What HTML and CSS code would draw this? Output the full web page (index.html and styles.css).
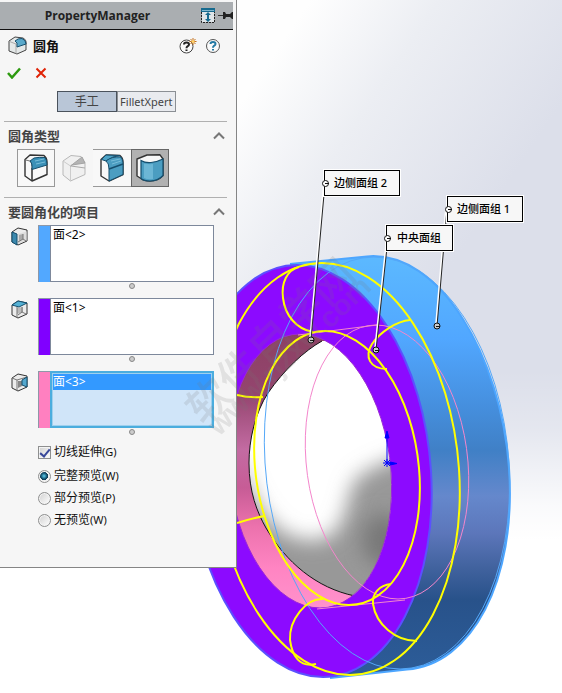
FILE: index.html
```html
<!DOCTYPE html>
<html lang="zh-CN">
<head>
<meta charset="utf-8">
<title>PropertyManager</title>
<link rel="stylesheet" href="styles.css">
</head>
<body>
<main class="stage">
<svg class="scene" viewBox="0 0 562 693" preserveAspectRatio="xMinYMin slice" aria-hidden="true">
  <defs>
    <linearGradient id="sky" gradientUnits="userSpaceOnUse" x1="290" y1="30" x2="510" y2="180">
      <stop offset="0" stop-color="#fefefe"/><stop offset=".4" stop-color="#eceef3"/><stop offset="1" stop-color="#dcdfea"/>
    </linearGradient>
    <linearGradient id="floor" gradientUnits="userSpaceOnUse" x1="0" y1="370" x2="0" y2="540">
      <stop offset="0" stop-color="#fff" stop-opacity="0"/><stop offset=".35" stop-color="#fff" stop-opacity=".25"/><stop offset=".8" stop-color="#fff" stop-opacity=".85"/><stop offset="1" stop-color="#fff"/>
    </linearGradient>
    <linearGradient id="rim" gradientUnits="userSpaceOnUse" x1="0" y1="256" x2="0" y2="670">
      <stop offset="0" stop-color="#5cb9ff"/><stop offset=".2" stop-color="#51a7ff"/><stop offset=".37" stop-color="#458edc"/><stop offset=".47" stop-color="#4080c6"/><stop offset=".58" stop-color="#6588cc"/><stop offset=".67" stop-color="#5c76ba"/><stop offset=".75" stop-color="#42639f"/><stop offset=".83" stop-color="#28528a"/><stop offset="1" stop-color="#2c5c98"/>
    </linearGradient>
    <linearGradient id="bore" gradientUnits="userSpaceOnUse" x1="0" y1="334" x2="0" y2="609">
      <stop offset="0" stop-color="#8c4163"/><stop offset=".22" stop-color="#94456f"/><stop offset=".42" stop-color="#c36ba2"/><stop offset=".56" stop-color="#c75c96"/><stop offset=".7" stop-color="#ec72ad"/><stop offset=".85" stop-color="#ff84c2"/><stop offset="1" stop-color="#ff92cc"/>
    </linearGradient>
    <clipPath id="hole"><circle r="1" transform="matrix(81 0 10 137 310 471)"/></clipPath>
    <clipPath id="opening"><path d="M322 341C304 351 284 370 268 393C255 413 249 440 249 463C249 492 257 512 266 528C286 562 316 588 355 596H420V341Z"/></clipPath>
    <filter id="soft" x="-40%" y="-40%" width="180%" height="180%"><feGaussianBlur stdDeviation="10"/></filter>
  </defs>
  <rect class="sky" width="562" height="693"/>
  <rect class="floor" width="562" height="693"/>

  <path class="rim" d="M290 264L367 256.400C440 250 501 357 509 468C517 582 471 665 407 669.500L330 678Z"/>
  <path class="rim-edge" d="M290 264L367 256.400C440 250 501 357 509 468C517 582 471 665 407 669.500L330 678"/>
  <circle class="face" r="1" transform="matrix(121 0 13 206 310 471)"/>
  <g clip-path="url(#hole)">
    <rect x="220" y="330" width="190" height="290" fill="url(#bore)"/>
    <g clip-path="url(#opening)">
      <rect x="240" y="330" width="180" height="280" fill="#fff"/>
      <path class="shade" d="M238 450C256 522 285 543 320 540C348 532 345 500 354 482C368 466 390 462 430 445V620H270L235 560Z" filter="url(#soft)"/>
      <ellipse class="shade deep" cx="384" cy="540" rx="22" ry="26" filter="url(#soft)"/>
    </g>
    <path class="bore-edge" d="M322 341C304 351 284 370 268 393C255 413 249 440 249 463C249 492 257 512 266 528C286 562 316 588 355 596"/>
  </g>
  <circle class="hole-edge" r="1" transform="matrix(81 0 10 137 310 471)"/>

  <circle class="line-blue" r="1" transform="matrix(122 0 13 206 387 463)"/>
  <circle class="line-pink" r="1" transform="matrix(81 0 11 137 387 462)"/>
  <path class="line-pink" d="M298 335L377 325M317 609L405 600"/>
  <g class="preview">
    <circle r="1" transform="matrix(123 0 14 206 336 469)"/>
    <circle r="1" transform="matrix(82 0 12 137 337 468)"/>
    <path d="M299 267C287 270 281 283 283 298C285 315 296 329 313 332"/>
    <path d="M410 320C397 321 380 332 372 344C364 357 370 369 387 369"/>
    <path d="M237 395Q249 398 263 397M237 523Q250 519 264 516"/>
    <path d="M323 599C306 598 289 620 290 640C292 655 299 668 316 664"/>
    <path d="M391 584C379 585 372 594 373 604C376 624 395 641 417 641"/>
  </g>
  <g class="origin">
    <path d="M387 462V438M387 463H393M384 460L390 466M390 460L384 466M383 463H391M387 459V467"/>
    <path class="origin-tip" d="M387 431L389 438H385ZM397 463.500L390 462V465Z"/>
  </g>

  <g class="leader-halo"><path d="M324 183L310 340M446 209L436 326M387 238L375 350"/></g>
  <g class="leader"><path d="M325 183L311 340M447 209L437 326M388 238L376 350"/></g>
  <g class="pin">
    <circle cx="311" cy="340" r="3"/><circle cx="376" cy="350" r="3"/><circle cx="437" cy="326" r="3"/>
    <path d="M310 340.500H314M375 350.500H379M436 326.500H440"/>
  </g>
  <g class="callout">
    <rect class="halo" x="323" y="169" width="78" height="28"/><rect class="box" x="324.500" y="170.500" width="75" height="25"/>
    <rect class="halo" x="446" y="195" width="78" height="28"/><rect class="box" x="447.500" y="196.500" width="75" height="25"/>
    <rect class="halo" x="385" y="224" width="69" height="28"/><rect class="box" x="386.500" y="225.500" width="66" height="25"/>
    <text x="334" y="187">边侧面组 2</text>
    <text x="457" y="213">边侧面组 1</text>
    <text x="397" y="242">中央面组</text>
  </g>
  <g class="pin label-pin">
    <circle cx="325.500" cy="183.500" r="3"/><circle cx="448.500" cy="209.500" r="3"/><circle cx="387.500" cy="238.500" r="3"/>
    <path d="M325 183.500H329M448 209.500H452M387 238.500H391"/>
  </g>
</svg>

<aside class="panel">
  <header class="panel-bar">
    <h1>PropertyManager</h1>
    <button class="plain" aria-label="展开"><svg width="14" height="15" viewBox="0 0 14 15"><path d="M1 4H13V14H1Z" fill="#dfe5e8"/><path d="M.5 4V14.500H13.500V4" fill="none" stroke="#222" stroke-dasharray="2 1"/><path d="M0 0H14V4H0Z" fill="#176a8e"/><path d="M1 2.500H13" stroke="#7fb6cc"/><path d="M7 4L10 7H8V11H10L7 14L4 11H6V7H4Z" fill="#176a8e"/></svg></button>
    <button class="plain" aria-label="固定"><svg width="15" height="11" viewBox="0 0 15 11"><path d="M0 5.500H6" stroke="#333"/><path d="M5 2H7L8 4H12L14 2H15V9H14L12 7H8L7 9H5Z" fill="#222"/></svg></button>
  </header>
  <div class="title-row">
    <svg width="20" height="20" viewBox="0 0 20 20"><path d="M1 5L7 1L15 2Q19 4 18 9V14L9 18L1 15Z" fill="#e4e8e8" stroke="#444" stroke-linejoin="round"/><path d="M1.500 5.500L8 8V17.500" fill="none" stroke="#aaa"/><path d="M7 5Q10 2 14 2.500Q18 4 18 8L9 11Q10 6 7 5Z" fill="#5aa9cb" stroke="#154e6d"/></svg>
    <h2>圆角</h2>
    <button class="plain" aria-label="新增功能"><svg width="18" height="16" viewBox="0 0 18 16"><circle cx="7.500" cy="8.500" r="6.500" fill="#fafafa" stroke="#444"/><path d="M5 6.500Q5 4.500 7.500 4.500T10 6.500Q10 7.500 8.500 8.300Q7.500 9 7.500 10.300M7.500 11.500V13" fill="none" stroke="#222" stroke-width="2"/><path d="M14 0V7M10.500 3.500H17.500M11.500 1L16.500 6M16.500 1L11.500 6" stroke="#c4711a"/><circle cx="14" cy="3.500" r="1.500" fill="#ffd36a"/></svg></button>
    <button class="plain" aria-label="帮助"><svg width="16" height="16" viewBox="0 0 16 16"><circle cx="8" cy="8" r="6.500" fill="#fafafa" stroke="#555"/><path d="M5.500 6Q5.500 4 8 4T10.500 6Q10.500 7 9 7.800Q8 8.500 8 9.800M8 11V12.500" fill="none" stroke="#2479a4" stroke-width="2"/></svg></button>
  </div>
  <div class="confirm-row">
    <button class="plain" aria-label="确定"><svg width="14" height="12" viewBox="0 0 14 12"><path d="M1 6L5 10.500L13 1.500" fill="none" stroke="#2d9a10" stroke-width="2.500"/></svg></button>
    <button class="plain" aria-label="取消"><svg width="12" height="12" viewBox="0 0 12 12"><path d="M1.500 1.500L10.500 10.500M10.500 1.500L1.500 10.500" stroke="#e02306" stroke-width="2"/></svg></button>
  </div>
  <div class="tabs">
    <button class="tab active">手工</button><button class="tab">FilletXpert</button>
  </div>

  <section class="group">
    <div class="group-head"><h3>圆角类型</h3><button class="plain" aria-label="折叠"><svg width="12" height="8" viewBox="0 0 12 8"><path d="M1 6.500L6 1.500L11 6.500" fill="none" stroke="#777" stroke-width="2"/></svg></button></div>
    <div class="types">
      <button class="type" aria-label="恒定大小圆角"><svg width="24" height="28" viewBox="0 0 24 28"><path d="M1 5.500L6 1L20 1.500Q23 4 23 8V20.500L8 27L1 22Z" fill="#f8f8f8" stroke="#333" stroke-width="1.400" stroke-linejoin="round"/><path d="M1.500 6L6 7Q8 9 8 13V26.500" fill="none" stroke="#777"/><path d="M8 14V27" stroke="#333" stroke-width="1.300"/><path d="M6 7L10 4Q15 3 21 3.500Q23 6 23 11L8 15.500Q8.500 9 6 7Z" fill="#3a90b7" stroke="#154e6d"/><path d="M11 7L20 5M12 10L21 8" stroke="#78bdd9"/></svg></button>
      <button class="type off" aria-label="变量大小圆角" disabled><svg width="24" height="28" viewBox="0 0 24 28"><path d="M1 7L9 1.500L19 2.500L23 9V20.500L8.500 27L1 21Z" fill="#f0f0f0" stroke="#b8b8b8" stroke-linejoin="round"/><path d="M1 7L8.500 12V27" fill="none" stroke="#ccc"/><path d="M8.500 12L20 3L23 9L10 11Z" fill="#b4b4b4" stroke="#a4a4a4"/><path d="M9 12L23 14" stroke="#aaa"/></svg></button>
      <button class="type middle" aria-label="面圆角"><svg width="24" height="28" viewBox="0 0 24 28"><path d="M1 5.500L6 1L20 1.500Q23 4 23 8V20.500L9 27L1 22Z" fill="#f8f8f8" stroke="#333" stroke-width="1.400" stroke-linejoin="round"/><path d="M1.500 5.500L6 1L20 1.500L13 3L6 7Z" fill="#4ea3c6" stroke="#154e6d"/><path d="M6 7Q12 2 21 3Q23 6 23 9V20.500L9 27V15Q9 9 6 7Z" fill="#4b9dc1" stroke="#154e6d"/><path d="M9 15L23 10" stroke="#154e6d" stroke-width="1.500"/><path d="M11 7L20 5M12 10L21 7" stroke="#78bdd9"/></svg></button>
      <button class="type active" aria-label="完整圆角"><svg width="28" height="28" viewBox="0 0 28 28"><path d="M1 5L11 1L24 .800L27 5V21.500Q22 27 14 27Q8 27 5 24.500L1 22Z" fill="#f7f7f7" stroke="#333" stroke-width="1.400" stroke-linejoin="round"/><path d="M5 6.500Q9 9 15 8.500Q21 8 27 5V21.500Q22 27 14 27Q8 27 5 24.500Z" fill="#4b9dc1" stroke="#154e6d" stroke-width="1.200"/><path d="M8 9.500Q12 10.500 17 10V25Q12 26 8 24Z" fill="#8ed0ea" opacity=".5"/></svg></button>
    </div>
  </section>

  <section class="group">
    <div class="group-head"><h3>要圆角化的项目</h3><button class="plain" aria-label="折叠"><svg width="12" height="8" viewBox="0 0 12 8"><path d="M1 6.500L6 1.500L11 6.500" fill="none" stroke="#777" stroke-width="2"/></svg></button></div>
    <div class="pick">
      <svg width="18" height="20" viewBox="0 0 18 20"><path d="M1 5L7 1L16 3V14L7 18L1 15Z" fill="#ececec" stroke="#333" stroke-linejoin="round"/><path d="M7 7L15.500 4.500V13.500L7 17Z" fill="#ddd"/><path d="M8 8L12 7V12L8 14Z" fill="#aaa"/><path d="M12 7V12L15 14M12 12L7 15" fill="none" stroke="#777"/><path d="M1 5L6 7V18L1 15Z" fill="#3b88ad" stroke="#154e6d"/></svg>
      <div class="field blue"><ul class="list" role="listbox" aria-label="面组 1"><li role="option">面&lt;2&gt;</li></ul></div>
      <i class="grip"></i>
    </div>
    <div class="pick">
      <svg width="18" height="20" viewBox="0 0 18 20"><path d="M1 5L7 1L16 3V14L7 18L1 15Z" fill="#ececec" stroke="#333" stroke-linejoin="round"/><path d="M6 8L12 7V12L6 14Z" fill="#bbb"/><path d="M6 7V18M11 7V12L7 15M11 12L15 14" fill="none" stroke="#777"/><path d="M1 5L7 1L16 3L8 7Z" fill="#55b1d4" stroke="#154e6d"/></svg>
      <div class="field violet"><ul class="list" role="listbox" aria-label="中央面组"><li role="option">面&lt;1&gt;</li></ul></div>
      <i class="grip"></i>
    </div>
    <div class="pick">
      <svg width="18" height="20" viewBox="0 0 18 20"><path d="M1 5L7 1L16 3V14L7 18L1 15Z" fill="#ececec" stroke="#333" stroke-linejoin="round"/><path d="M1 5L6 7L16 4M6 7V18" fill="none" stroke="#777"/><path d="M7 8H11V13L7 15Z" fill="#888"/><path d="M11 7L16 4V14L11 12Z" fill="#55a8ce" stroke="#154e6d"/></svg>
      <div class="field pink"><ul class="list focused" role="listbox" aria-label="面组 2"><li role="option" aria-selected="true">面&lt;3&gt;</li></ul></div>
      <i class="grip"></i>
    </div>
    <div class="options">
      <label class="option"><input type="checkbox" checked>切线延伸<span class="key">(G)</span></label>
      <label class="option"><input type="radio" name="preview" checked>完整预览<span class="key">(W)</span></label>
      <label class="option"><input type="radio" name="preview">部分预览<span class="key">(P)</span></label>
      <label class="option"><input type="radio" name="preview">无预览<span class="key">(W)</span></label>
    </div>
  </section>
</aside>

<svg class="scene watermark" viewBox="0 0 562 693" preserveAspectRatio="xMinYMin slice">
  <text class="mark-name" transform="translate(204 427) rotate(-44)">软件自学网</text>
  <text class="mark-url" transform="translate(219 437) rotate(-44)">www.rjzxw.com</text>
</svg>
</main>
</body>
</html>
```

FILE: styles.css
```css
* { box-sizing: border-box; }

body {
  margin: 0;
  background: #fff;
  color: #111;
  font: 12px/16px "Noto Sans", "Noto Sans CJK SC", sans-serif;
}

h1, h2, h3, ul { margin: 0; padding: 0; }
svg { display: block; }
button { font: inherit; color: inherit; padding: 0; }
.plain { border: 0; background: none; }

.stage { position: relative; min-height: 100vh; overflow: hidden; }
.scene { position: absolute; inset: 0; width: 100%; height: 100%; }

/* model view */
.sky { fill: url(#sky); }
.floor { fill: url(#floor); }
.scene circle, .scene path { vector-effect: non-scaling-stroke; }
.rim { fill: url(#rim); }
.rim-edge { fill: none; stroke: #4da6ff; stroke-width: 2; }
.face { fill: #8c0aff; stroke: #5b50ff; stroke-width: 2; }
.shade { fill: #989898; }
.deep { fill: #787878; }
.bore-edge { fill: none; stroke: #111; }
.hole-edge { fill: none; stroke: #9a28d8; }
.line-blue { fill: none; stroke: #55a8f8; }
.line-pink { fill: none; stroke: #f486cc; }
.preview { fill: none; stroke: #ff0; stroke-width: 2; }
.origin { stroke: #00f; fill: none; }
.origin-tip { fill: #00f; }
.leader-halo { stroke: #fff; stroke-width: 2; }
.leader { stroke: #222; }
.pin circle { fill: #ccc; stroke: #111; }
.pin path { stroke: #111; }
.label-pin circle { fill: #fff; }
.halo { fill: #fff; }
.box { fill: #f7f7f7; stroke: #000; }
.callout text { font: 500 11px "Noto Sans", "Noto Sans CJK SC", sans-serif; fill: #000; }

.watermark { pointer-events: none; fill: #777; opacity: .16; font-weight: 700; }
.mark-name { font-size: 43px; font-family: "Noto Sans CJK SC", sans-serif; font-weight: 500; }
.mark-url { font-size: 29px; font-family: "Liberation Sans", sans-serif; }

/* property panel */
.panel {
  position: relative;
  width: 237px;
  min-height: 568px;
  padding-top: 2px;
  background: #f6f6f6;
  border: solid #858585;
  border-width: 0 1px 1px 0;
}

.panel-bar {
  display: flex;
  align-items: center;
  gap: 3px;
  height: 28px;
  margin-right: 3px;
  background: #aaaeb1;
  border-bottom: 1px solid #111;
}
.panel-bar h1 { flex: 1; padding-right: 3px; text-align: center; font: 700 12px/16px "Open Sans", sans-serif; color: #222; }

.title-row { display: flex; align-items: center; gap: 8px; height: 32px; padding: 0 15px 0 8px; }
.title-row h2 { flex: 1; margin-left: -3px; font-size: 13px; line-height: 16px; }

.confirm-row { display: flex; align-items: center; gap: 14px; height: 22px; padding-left: 7px; }

.tabs { display: flex; width: 119px; height: 21px; margin: 7px auto 9px 57px; }
.tab { flex: 1; border: 1px solid #8b8f94; background: #e9ebef; color: #444; font-size: 11px; line-height: 16px; }
.tab.active { border-color: #4a525c; background: #b9c6d7; font-size: 12px; }

.group { margin: 0 9px 0 4px; border-top: 1px solid #b0b0b0; }
.group-head { display: flex; align-items: center; justify-content: space-between; height: 27px; padding: 0 2px 0 4px; color: #444; }
.group-head h3 { font-size: 13px; line-height: 16px; font-weight: 700; }

.types { display: flex; margin: 0 0 10px 13px; }
.type { display: flex; align-items: center; justify-content: center; width: 38px; height: 38px; border: 1px solid #999; background: #f8f8f8; }
.type.off { border-color: transparent; background: none; }
.type.middle { border-width: 1px 0; }
.type.active { background: #b1b1b1; border-color: #666; }

.pick { display: grid; grid-template-columns: 34px 176px; }
.pick > svg { margin: 2px 0 0 7px; }
.field { display: flex; height: 57px; border: solid #8e98a8; border-width: 1px 0 0 1px; padding-left: 11px; }
.blue { background: #52a8ff; }
.violet { background: #8000ff; }
.pink { background: #ff80c0; }
.list { flex: 1; margin-top: -1px; border: 1px solid #7d889b; background: #fff; list-style: none; padding: 1px 2px; color: #000; }
.list.focused { border: 2px solid #4badde; background: #d0e5f9; box-shadow: inset 0 0 0 1px #9fd0ee; padding: 1px; }
.focused li { background: #3399ff; color: #fff; }
.grip { grid-column: 2; width: 6px; height: 6px; margin: 1px 0 9px 91px; border: 1px solid #888; border-radius: 50%; background: #ccc; }

.options { display: flex; flex-direction: column; gap: 6px; padding: 0 0 0 34px; }
.option { display: flex; align-items: center; height: 16px; }
.option:first-child { margin-bottom: 2px; }
.key { font-size: 11px; }
.option input {
  appearance: none;
  width: 13px;
  height: 13px;
  margin: 0 3px 0 0;
  border: 1px solid #8e8f8f;
  background: linear-gradient(135deg, #d0d0d0, #fff);
  box-shadow: inset 0 0 0 1px #f4f4f4;
}
.option [type="radio"] { border-radius: 50%; }
.option [type="radio"]:checked { background: radial-gradient(circle at 5px 5px, #5fd0f0 0, #12506e 3px, #0c3550 4px, #eee 4px); }
.option [type="checkbox"] { display: grid; place-items: center; }
.option [type="checkbox"]:checked::before {
  content: "";
  width: 4px;
  height: 8px;
  border: solid #38489a;
  border-width: 0 2px 2px 0;
  transform: rotate(40deg);
}
```
